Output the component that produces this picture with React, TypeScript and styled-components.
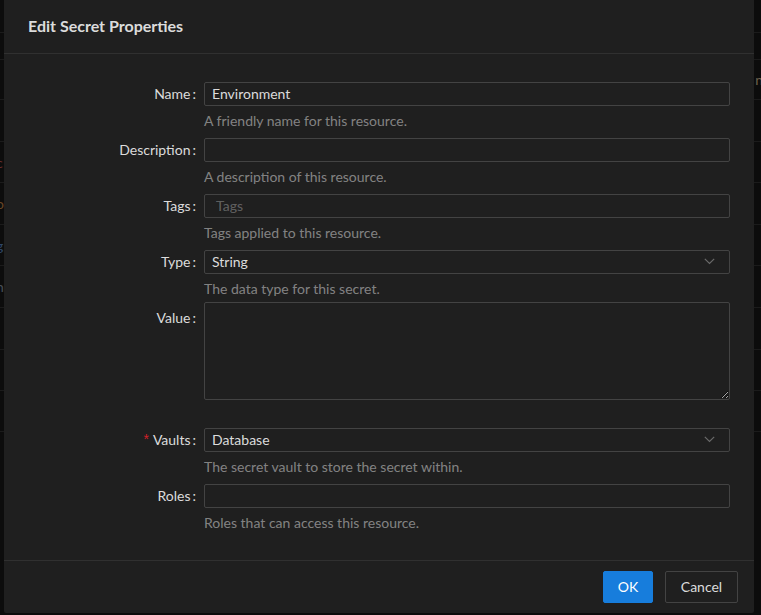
import React from "react";
import styled, { createGlobalStyle } from "styled-components";

const Global = createGlobalStyle`
  html, body { margin: 0; padding: 0; background: #0c0c0c; }
  body { font-family: "Segoe UI", Lato, "Liberation Sans", sans-serif; overflow: hidden; }
  * { box-sizing: border-box; }
`;

const Page = styled.div`
  position: relative;
  width: 761px;
  height: 615px;
  background: #0c0c0c;
  overflow: hidden;
`;

const BgRow = styled.div<{ $h: number }>`
  height: ${(p) => p.$h}px;
  border-bottom: 1px solid #1b1b1b;
  display: flex;
  align-items: center;
  justify-content: space-between;
  font-family: "Segoe UI", Lato, sans-serif;
  font-size: 14px;
  color: #3a3a3a;
`;

const BgFrag = styled.span<{ $c: string }>`
  color: ${(p) => p.$c};
  opacity: 0.5;
`;

const Dialog = styled.div`
  position: absolute;
  left: 4px;
  top: 0;
  width: 750px;
  height: 613px;
  background: #1f1f1f;
  border-radius: 0 0 2px 2px;
  display: flex;
  flex-direction: column;
  color: rgba(255, 255, 255, 0.85);
`;

const Header = styled.div`
  height: 54px;
  padding: 0 24px;
  display: flex;
  align-items: center;
  border-bottom: 1px solid #303030;
`;

const Title = styled.div`
  font-size: 16px;
  font-weight: 700;
  color: rgba(255, 255, 255, 0.85);
  padding-bottom: 3px;
`;

const Body = styled.div`
  flex: 1;
  padding-top: 28px;
  display: flex;
  flex-direction: column;
`;

const Row = styled.div<{ $mb?: number }>`
  display: grid;
  grid-template-columns: 200px 526px;
  margin-bottom: ${(p) => p.$mb ?? 0}px;
`;

const Label = styled.label<{ $pt?: number }>`
  display: flex;
  justify-content: flex-end;
  align-items: flex-start;
  height: 24px;
  line-height: 23px;
  padding-top: ${(p) => p.$pt ?? 0}px;
  font-size: 14px;
  color: rgba(255, 255, 255, 0.85);
  white-space: nowrap;
`;

const Required = styled.span`
  color: #d32029;
  font-size: 14px;
  margin-right: 4px;
  font-family: SimSun, "Liberation Sans", sans-serif;
`;

const Colon = styled.span`
  margin: 0 8px 0 2px;
`;

const Control = styled.div`
  display: flex;
  flex-direction: column;
`;

const Input = styled.input`
  height: 24px;
  width: 100%;
  background: transparent;
  border: 1px solid #434343;
  border-radius: 2px;
  padding: 0 7px 2px;
  font-family: inherit;
  font-size: 14px;
  color: rgba(255, 255, 255, 0.85);
  outline: none;
  &::placeholder { color: rgba(255, 255, 255, 0.3); }
`;

const SelectBox = styled.div<{ $pl?: number }>`
  height: 24px;
  width: 100%;
  border: 1px solid #434343;
  border-radius: 2px;
  padding: 0 14px 1px ${(p) => p.$pl ?? 7}px;
  display: flex;
  align-items: center;
  justify-content: space-between;
  font-size: 14px;
  color: rgba(255, 255, 255, 0.85);
`;

const Placeholder = styled.span`
  color: rgba(255, 255, 255, 0.3);
`;

const TextArea = styled.textarea`
  width: 100%;
  height: 98px;
  background: transparent;
  border: 1px solid #434343;
  border-radius: 2px;
  padding: 4px 7px;
  font-family: inherit;
  font-size: 14px;
  color: rgba(255, 255, 255, 0.85);
  resize: vertical;
  outline: none;
  display: block;
  color-scheme: dark;
`;

const Help = styled.div<{ $pb?: number }>`
  padding-top: 4px;
  padding-bottom: ${(p) => p.$pb ?? 6}px;
  line-height: 22px;
  font-size: 14px;
  color: rgba(255, 255, 255, 0.45);
`;

const Footer = styled.div`
  height: 53px;
  border-top: 1px solid #303030;
  display: flex;
  justify-content: flex-end;
  align-items: flex-start;
  padding: 10px 16px 0 0;
  gap: 12px;
`;

const Button = styled.button<{ $primary?: boolean }>`
  height: 32px;
  padding: 0 0 1px;
  border-radius: 2px;
  font-family: inherit;
  font-size: 14px;
  cursor: pointer;
  border: 1px solid ${(p) => (p.$primary ? "#177ddc" : "#434343")};
  background: ${(p) => (p.$primary ? "#177ddc" : "transparent")};
  color: ${(p) => (p.$primary ? "#fff" : "rgba(255,255,255,0.85)")};
  width: ${(p) => (p.$primary ? 50 : 73)}px;
`;

const Chevron = () => (
  <svg width="11" height="7" viewBox="0 0 11 7" fill="none">
    <path d="M0.8 0.8 L5.5 5.5 L10.2 0.8" stroke="#6a6a6a" strokeWidth="1.2" />
  </svg>
);

const bgRows: { h: number; l?: [string, string]; r?: [string, string] }[] = [
  { h: 33 },
  { h: 27 },
  { h: 40, r: ["n", "#c8b38a"] },
  { h: 42 },
  { h: 41, l: ["c", "#c05050"] },
  { h: 42, l: ["o", "#c08040"] },
  { h: 41, l: ["g", "#5080c0"] },
  { h: 42, l: ["n", "#8090a0"] },
  { h: 42 },
  { h: 41 },
  { h: 41 },
];

export default function App() {
  return (
    <Page>
      <Global />
      {bgRows.map((r, i) => (
        <BgRow key={i} $h={r.h}>
          {r.l ? <BgFrag $c={r.l[1]} style={{ marginLeft: -4 }}>{r.l[0]}</BgFrag> : <span />}
          {r.r ? <BgFrag $c={r.r[1]} style={{ marginRight: -2 }}>{r.r[0]}</BgFrag> : <span />}
        </BgRow>
      ))}
      <Dialog>
        <Header>
          <Title>Edit Secret Properties</Title>
        </Header>
        <Body>
          <Row>
            <Label>Name<Colon>:</Colon></Label>
            <Control>
              <Input defaultValue="Environment" />
              <Help>A friendly name for this resource.</Help>
            </Control>
          </Row>
          <Row>
            <Label>Description<Colon>:</Colon></Label>
            <Control>
              <Input defaultValue="" />
              <Help>A description of this resource.</Help>
            </Control>
          </Row>
          <Row>
            <Label>Tags<Colon>:</Colon></Label>
            <Control>
              <SelectBox $pl={11}>
                <Placeholder>Tags</Placeholder>
              </SelectBox>
              <Help>Tags applied to this resource.</Help>
            </Control>
          </Row>
          <Row>
            <Label>Type<Colon>:</Colon></Label>
            <Control>
              <SelectBox>
                <span>String</span>
                <Chevron />
              </SelectBox>
              <Help $pb={2}>The data type for this secret.</Help>
            </Control>
          </Row>
          <Row $mb={28}>
            <Label $pt={4}>Value<Colon>:</Colon></Label>
            <Control>
              <TextArea />
            </Control>
          </Row>
          <Row>
            <Label><Required>*</Required>Vaults<Colon>:</Colon></Label>
            <Control>
              <SelectBox>
                <span>Database</span>
                <Chevron />
              </SelectBox>
              <Help>The secret vault to store the secret within.</Help>
            </Control>
          </Row>
          <Row>
            <Label>Roles<Colon>:</Colon></Label>
            <Control>
              <Input defaultValue="" />
              <Help>Roles that can access this resource.</Help>
            </Control>
          </Row>
        </Body>
        <Footer>
          <Button $primary>OK</Button>
          <Button>Cancel</Button>
        </Footer>
      </Dialog>
    </Page>
  );
}
